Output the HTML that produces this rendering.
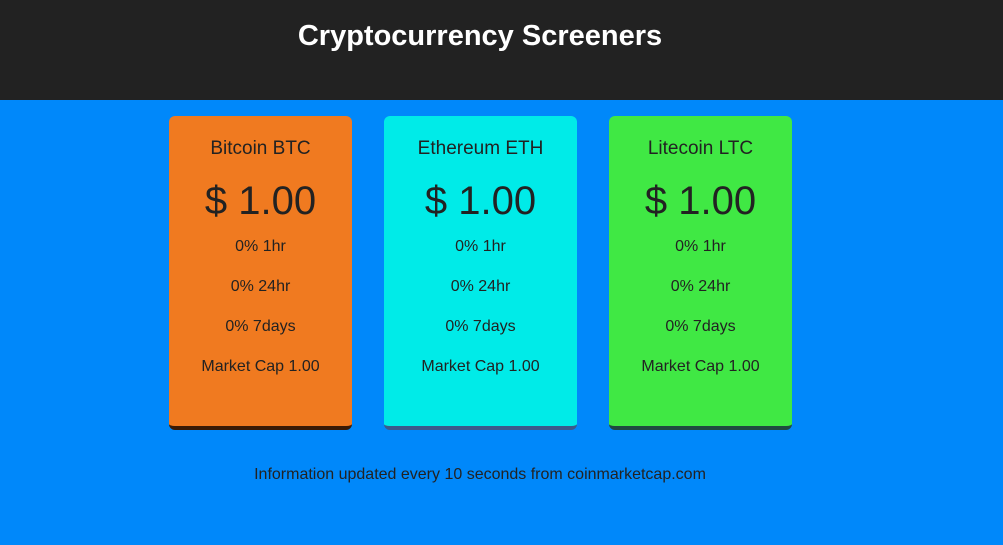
<!DOCTYPE html>
<html><head><style>
body{margin:0;width:1003px;height:545px;background:#0088fa;font-family:"Liberation Sans",sans-serif;color:#222;overflow:hidden;position:relative}
.h{position:absolute;left:0;top:0;width:1003px;height:100px;background:#222}
.h div{position:absolute;left:0;width:960px;top:20px;text-align:center;color:#fff;font-weight:bold;font-size:29px}
.c{position:absolute;top:116px;height:310px;border-radius:6px;border-bottom:4px solid;text-align:center}
.c .t{position:absolute;top:22px;width:100%;font-size:19px}
.c .p{position:absolute;top:63px;width:100%;font-size:40px}
.c .l{position:absolute;width:100%;font-size:16px}
.f{position:absolute;top:466px;left:0;width:960px;text-align:center;font-size:16px}
</style></head><body>
<div class="h"><div>Cryptocurrency Screeners</div></div>
<div class="c" style="left:169px;width:183px;background:#f07a20;border-color:#3a1a05">
<div class="t">Bitcoin BTC</div><div class="p">$ 1.00</div>
<div class="l" style="top:122px">0% 1hr</div><div class="l" style="top:162px">0% 24hr</div><div class="l" style="top:202px">0% 7days</div><div class="l" style="top:242px">Market Cap 1.00</div></div>
<div class="c" style="left:384px;width:193px;background:#00ebe8;border-color:#3b5a8a">
<div class="t">Ethereum ETH</div><div class="p">$ 1.00</div>
<div class="l" style="top:122px">0% 1hr</div><div class="l" style="top:162px">0% 24hr</div><div class="l" style="top:202px">0% 7days</div><div class="l" style="top:242px">Market Cap 1.00</div></div>
<div class="c" style="left:609px;width:183px;background:#40e844;border-color:#1f4a40">
<div class="t">Litecoin LTC</div><div class="p">$ 1.00</div>
<div class="l" style="top:122px">0% 1hr</div><div class="l" style="top:162px">0% 24hr</div><div class="l" style="top:202px">0% 7days</div><div class="l" style="top:242px">Market Cap 1.00</div></div>
<div class="f">Information updated every 10 seconds from coinmarketcap.com</div>
</body></html>
